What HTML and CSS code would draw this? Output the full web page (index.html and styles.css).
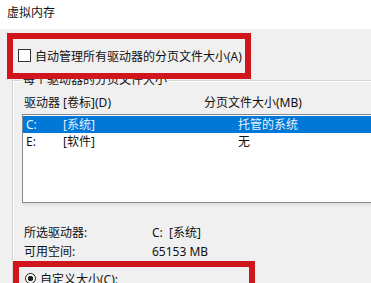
FILE: index.html
```html
<!DOCTYPE html>
<html lang="zh-CN">
<head>
    <meta charset="UTF-8">
    <meta name="viewport" content="width=device-width, initial-scale=1.0">
    <title>虚拟内存</title>
    <link rel="stylesheet" href="styles.css">
</head>
<body>
    <div class="window">
        <div class="titlebar">虚拟内存</div>

        <div class="auto-row">
            <span class="checkbox"></span>
            <span>自动管理所有驱动器的分页文件大小(A)</span>
        </div>

        <div class="group">
            <div class="group-title">每个驱动器的分页文件大小</div>

            <div class="list-head">
                <span class="head-drive">驱动器 [卷标](D)</span>
                <span>分页文件大小(MB)</span>
            </div>

            <div class="list">
                <div class="row selected">
                    <span class="col-letter">C:</span>
                    <span class="col-label">[系统]</span>
                    <span>托管的系统</span>
                </div>
                <div class="row">
                    <span class="col-letter">E:</span>
                    <span class="col-label">[软件]</span>
                    <span>无</span>
                </div>
            </div>

            <div class="info">
                <div class="info-row">
                    <span class="info-label">所选驱动器:</span>
                    <span>C:&nbsp;&nbsp;[系统]</span>
                </div>
                <div class="info-row">
                    <span class="info-label">可用空间:</span>
                    <span>65153 MB</span>
                </div>
            </div>

            <div class="radio-row">
                <span class="radio"></span>
                <span>自定义大小(C):</span>
            </div>
        </div>

        <!-- red highlight marks -->
        <div class="mark mark-auto"></div>
        <div class="mark mark-custom"></div>
    </div>
</body>
</html>
```

FILE: styles.css
```css
body {
    margin: 0;
    font-family: "Noto Sans", "Noto Sans CJK SC", sans-serif;
    font-size: 12px;
    color: #111;
}
.window {
    position: relative;
    width: 371px;
    height: 283px;
    overflow: hidden;
    background-color: #f0f0f0;
}
.titlebar {
    height: 29px;
    line-height: 26px;
    padding-left: 7px;
    background-color: #fff;
}
.auto-row {
    display: flex;
    align-items: center;
    gap: 4px;
    height: 17px;
    margin-top: 18px;
    padding-left: 18px;
}
.checkbox {
    width: 11px;
    height: 11px;
    border: 1px solid #333;
    background-color: #fff;
}
.group {
    width: 400px;
    height: 260px;
    margin: 16px 0 0 12px;
    padding-left: 9px;
    border-left: 1px solid #d5d5d5;
    border-top: 1px solid #d5d5d5;
    box-shadow: inset 1px 1px 0 #fff;
}
.group-title {
    width: max-content;
    margin-top: -9px;
    padding: 0 1px;
    line-height: 16px;
    background-color: #f0f0f0;
}
.list-head {
    display: flex;
    line-height: 16px;
    margin-top: 7px;
    padding-left: 2px;
}
.head-drive {
    width: 180px;
}
.list {
    height: 89px;
    margin-top: 3px;
    padding-top: 1px;
    border: 1px solid #828790;
    background-color: #fff;
    box-shadow: 0 3px 0 #e4e4e4;
    box-sizing: border-box;
}
.row {
    display: flex;
    height: 17px;
    line-height: 17px;
    padding-left: 3px;
}
.row.selected {
    background-color: #0078d7;
    color: #e4f1ff;
}
.col-letter {
    width: 37px;
}
.col-label {
    width: 175px;
}
.info {
    margin-top: 20px;
    padding-left: 2px;
}
.info-row {
    display: flex;
    line-height: 19px;
}
.info-label {
    width: 128px;
}
.radio-row {
    display: flex;
    align-items: center;
    gap: 4px;
    height: 17px;
    margin-top: 9px;
    padding-left: 3px;
}
.radio {
    width: 9px;
    height: 9px;
    border: 1px solid #222;
    border-radius: 50%;
    background: radial-gradient(circle, #222 0 2.5px, #fff 3px);
}
.mark {
    position: absolute;
    border: 6px solid #d0151d;
    box-sizing: border-box;
}
.mark-auto {
    left: 7px;
    top: 33px;
    width: 244px;
    height: 46px;
}
.mark-custom {
    left: 13px;
    top: 261px;
    width: 242px;
    height: 40px;
}
```
